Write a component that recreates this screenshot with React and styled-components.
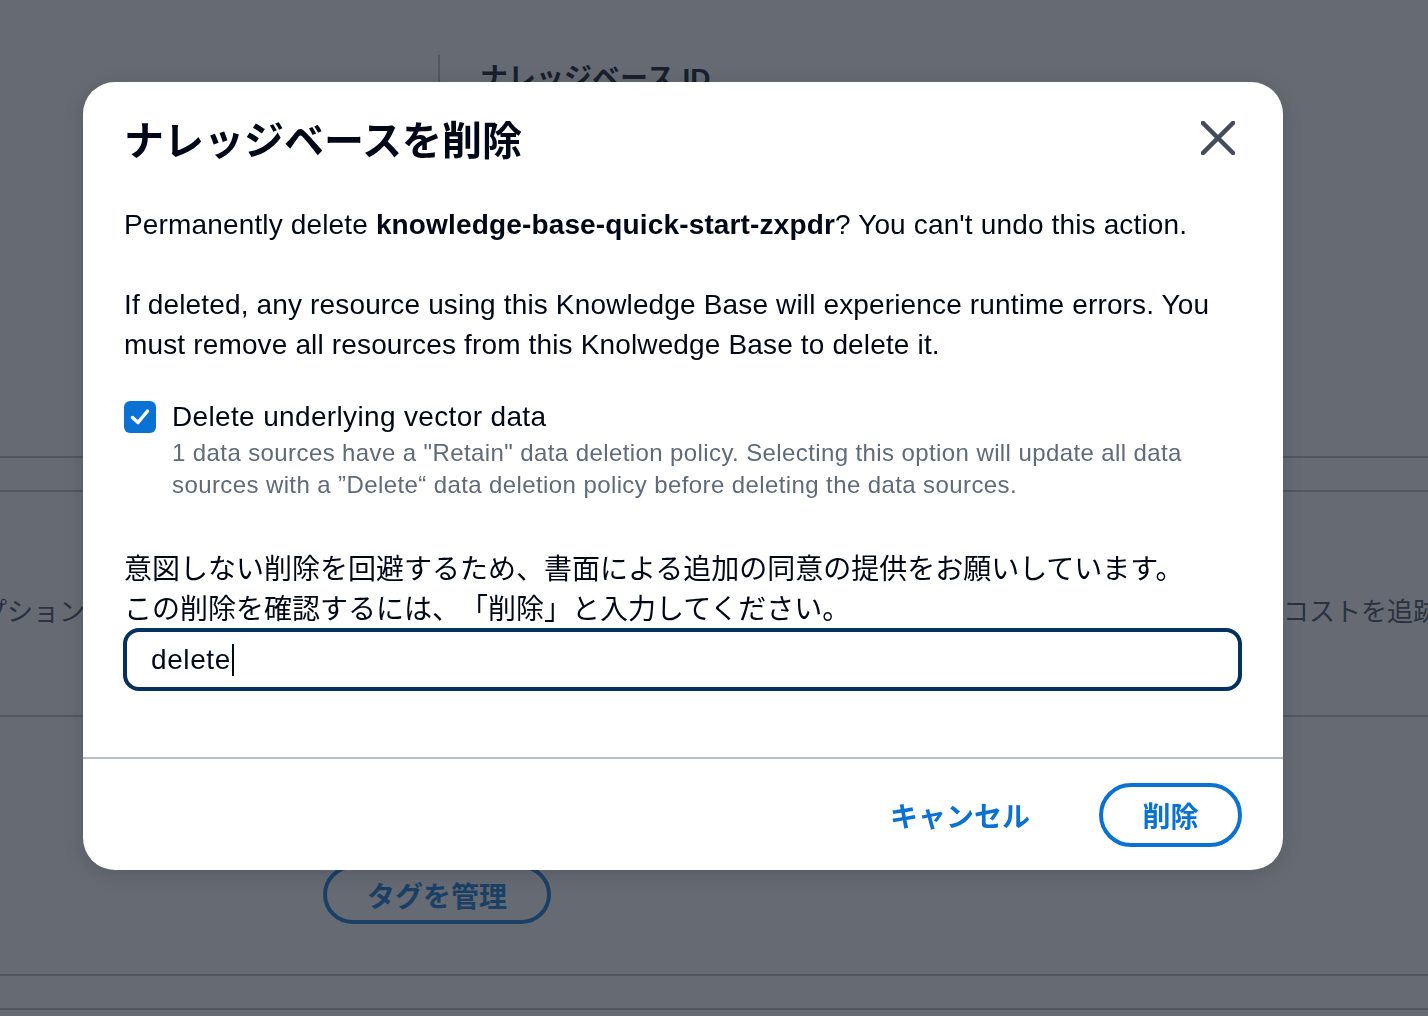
import React from "react";
import styled, { createGlobalStyle } from "styled-components";

const Global = createGlobalStyle`
  html, body { margin: 0; padding: 0; }
  body {
    font-family: "Liberation Sans", "Noto Sans CJK JP", sans-serif;
    color: #000716;
    background: #ffffff;
    text-spacing-trim: space-all;
  }
  * { box-sizing: border-box; }
`;

/* ---------- underlying page ---------- */
const Page = styled.div`
  width: 1428px;
  height: 1016px;
  overflow: hidden;
  background: #ffffff;
  display: flex;
  flex-direction: column;
`;

const TopSection = styled.section`
  height: 456px;
  display: grid;
  grid-template-columns: 438px 1fr;
  padding-top: 55px;
`;

const DetailColumn = styled.div`
  border-left: 2px solid #b6bec9;
  padding: 6px 0 0 40px;
`;

const FieldLabel = styled.div`
  font-size: 28px;
  font-weight: 700;
  line-height: 36px;
  color: #000716;
`;

const Rule = styled.div`
  height: 2px;
  flex: none;
  background: #b6bec9;
`;

const Band = styled.div`
  height: 32px;
  flex: none;
`;

const MidSection = styled.section`
  height: 223px;
  display: flex;
  justify-content: space-between;
  align-items: center;
  padding-top: 12px;
`;

const FaintText = styled.span`
  font-size: 26px;
  color: #3a4554;
  white-space: nowrap;
  margin-left: ${(p) => p.$shift || 0}px;
  width: ${(p) => (p.$w ? p.$w + "px" : "auto")};
`;

const LowSection = styled.section`
  height: 257px;
  display: flex;
  align-items: flex-start;
  padding: 148px 0 0 323px;
`;

const PillButton = styled.button`
  height: 59px;
  padding: 0 40px;
  border-radius: 30px;
  border: 4px solid #0972d3;
  background: transparent;
  color: #0972d3;
  font-family: inherit;
  font-size: 28px;
  font-weight: 700;
`;

/* ---------- modal ---------- */
const Overlay = styled.div`
  position: fixed;
  inset: 0;
  background: rgba(35, 43, 55, 0.7);
  display: flex;
  align-items: flex-start;
  justify-content: flex-start;
  padding: 82px 0 0 83px;
`;

const Dialog = styled.div`
  width: 1200px;
  height: 788px;
  background: #ffffff;
  border-radius: 32px;
  box-shadow: 0 4px 20px rgba(0, 7, 22, 0.15);
  display: flex;
  flex-direction: column;
  overflow: hidden;
`;

const Header = styled.header`
  display: flex;
  justify-content: space-between;
  align-items: center;
  padding: 32px 47px 0 41px;
`;

const Title = styled.h2`
  margin: 0;
  font-family: "Noto Sans CJK JP", sans-serif;
  font-size: 40px;
  line-height: 48px;
  font-weight: 700;
  color: #000716;
`;

const CloseButton = styled.button`
  width: 36px;
  height: 36px;
  padding: 0;
  border: none;
  background: none;
  display: flex;
  align-items: center;
  justify-content: center;
  color: #414d5c;
`;

const Body = styled.div`
  flex: 1;
  padding: 43px 41px 0 41px;
`;

const Para = styled.p`
  margin: ${(p) => p.$top || 0}px 0 0 0;
  font-size: 28px;
  line-height: 40px;
  letter-spacing: ${(p) => (p.$latin ? "0.15px" : "0")};
  color: #000716;
`;

const CheckRow = styled.div`
  margin-top: 32px;
  display: grid;
  grid-template-columns: 32px 1fr;
  column-gap: 16px;
`;

const CheckBox = styled.span`
  margin-top: 4px;
  width: 32px;
  height: 32px;
  border-radius: 6px;
  background: #0972d3;
  display: flex;
  align-items: center;
  justify-content: center;
`;

const CheckLabel = styled.div`
  font-size: 28px;
  line-height: 40px;
  letter-spacing: 0.35px;
  color: #000716;
`;

const CheckHint = styled.div`
  font-size: 24px;
  line-height: 32px;
  letter-spacing: 0.4px;
  color: #5f6b7a;
`;

const InputBox = styled.div`
  width: 1119px;
  height: 63px;
  margin: -2px 0 0 -1px;
  border: 4px solid #033160;
  border-radius: 16px;
  padding-left: 24px;
  display: flex;
  align-items: center;
  font-size: 28px;
  letter-spacing: 0.6px;
  color: #000716;
`;

const Caret = styled.span`
  width: 2px;
  height: 32px;
  background: #000716;
  margin-left: 1px;
`;

const Footer = styled.footer`
  height: 113px;
  border-top: 2px solid #b6bec9;
  display: flex;
  justify-content: flex-end;
  align-items: center;
  gap: 69px;
  padding: 0 41px 0 0;
`;

const LinkButton = styled.button`
  border: none;
  background: none;
  padding: 0;
  color: #0972d3;
  font-family: "Noto Sans CJK JP", sans-serif;
  font-size: 28px;
  font-weight: 700;
`;

const PrimaryOutline = styled.button`
  width: 143px;
  height: 64px;
  border: 4px solid #0972d3;
  border-radius: 32px;
  background: #ffffff;
  color: #0972d3;
  font-family: "Noto Sans CJK JP", sans-serif;
  font-size: 28px;
  font-weight: 700;
`;

export default function App() {
  return (
    <>
      <Global />
      <Page>
        <TopSection>
          <div />
          <DetailColumn>
            <FieldLabel>ナレッジベース ID</FieldLabel>
          </DetailColumn>
        </TopSection>
        <Rule />
        <Band />
        <Rule />
        <MidSection>
          <FaintText $shift={-45}>オプション</FaintText>
          <FaintText $w={145}>コストを追跡</FaintText>
        </MidSection>
        <Rule />
        <LowSection>
          <PillButton>タグを管理</PillButton>
        </LowSection>
        <Rule />
        <Band />
        <Rule />
      </Page>

      <Overlay>
        <Dialog role="dialog">
          <Header>
            <Title>ナレッジベースを削除</Title>
            <CloseButton aria-label="close">
              <svg width="34" height="34" viewBox="0 0 34 34">
                <path
                  d="M2 2 L32 32 M32 2 L2 32"
                  stroke="currentColor"
                  strokeWidth="4.5"
                  strokeLinecap="square"
                  fill="none"
                />
              </svg>
            </CloseButton>
          </Header>
          <Body>
            <Para $latin>
              Permanently delete <b>knowledge-base-quick-start-zxpdr</b>? You can't undo this action.
            </Para>
            <Para $latin $top={40}>
              If deleted, any resource using this Knowledge Base will experience runtime errors. You
              must remove all resources from this Knolwedge Base to delete it.
            </Para>
            <CheckRow>
              <CheckBox>
                <svg width="20" height="18" viewBox="0 0 20 18">
                  <path
                    d="M2.5 9.5 L8 14.5 L17.5 3"
                    stroke="#ffffff"
                    strokeWidth="3.5"
                    strokeLinecap="round"
                    strokeLinejoin="round"
                    fill="none"
                  />
                </svg>
              </CheckBox>
              <CheckLabel>Delete underlying vector data</CheckLabel>
              <span />
              <CheckHint>
                1 data sources have a "Retain" data deletion policy. Selecting this option will update all data
                sources with a ”Delete“ data deletion policy before deleting the data sources.
              </CheckHint>
            </CheckRow>
            <Para $top={49}>
              意図しない削除を回避するため、書面による追加の同意の提供をお願いしています。
              <br />
              この削除を確認するには、「削除」と入力してください。
            </Para>
            <InputBox>
              delete
              <Caret />
            </InputBox>
          </Body>
          <Footer>
            <LinkButton>キャンセル</LinkButton>
            <PrimaryOutline>削除</PrimaryOutline>
          </Footer>
        </Dialog>
      </Overlay>
    </>
  );
}
